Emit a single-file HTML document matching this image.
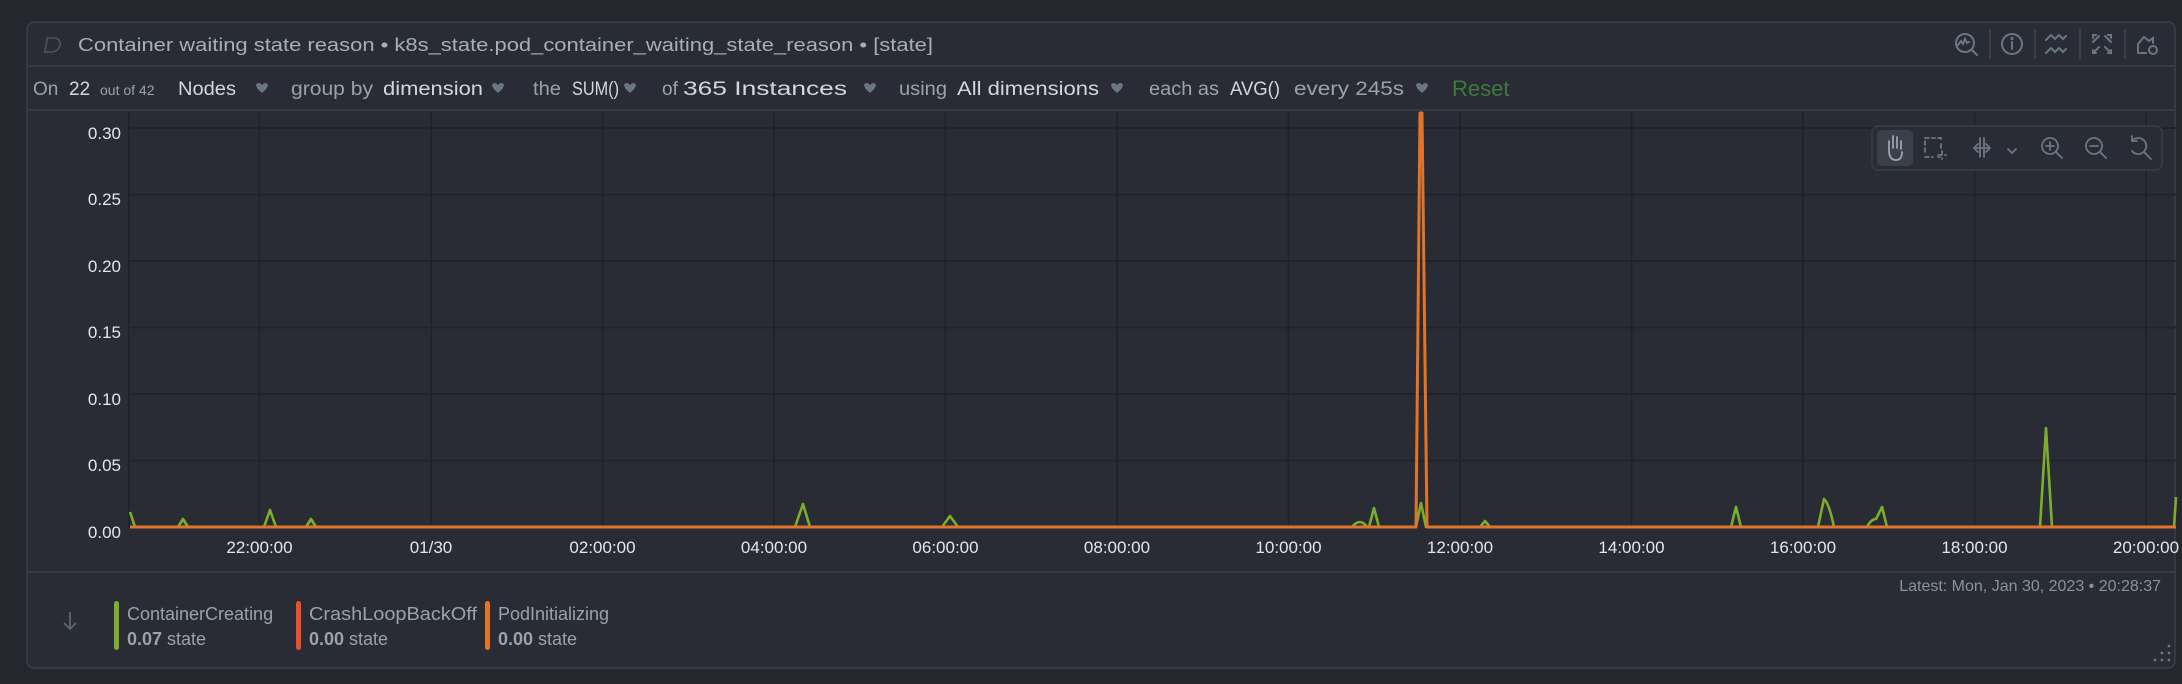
<!DOCTYPE html>
<html><head><meta charset="utf-8"><style>
html,body{margin:0;padding:0;background:#24272d;width:2182px;height:684px;overflow:hidden}
svg{display:block}
text{font-family:"Liberation Sans",sans-serif}
</style></head><body>
<svg width="2182" height="684" viewBox="0 0 2182 684" xmlns="http://www.w3.org/2000/svg">
<rect x="0" y="0" width="2182" height="684" fill="#24272d"/>
<rect x="27" y="22" width="2148" height="646" rx="7" fill="#292c34" stroke="#3b3f48" stroke-width="1.5"/>
<line x1="27" y1="66" x2="2175" y2="66" stroke="#3b3f48" stroke-width="1.5"/>
<line x1="27" y1="110" x2="2175" y2="110" stroke="#3b3f48" stroke-width="1.5"/>
<line x1="27" y1="572" x2="2175" y2="572" stroke="#3b3f48" stroke-width="1.5"/>

<!-- title -->
<path d="M47 38 h7 a7 7 0 0 1 0 14 h-7 z" fill="none" stroke="#4d5460" stroke-width="1.6" transform="skewX(-10) translate(7,0)"/>
<text x="78" y="51" font-size="18.5" fill="#a7aeb8" textLength="855" lengthAdjust="spacingAndGlyphs">Container waiting state reason • k8s_state.pod_container_waiting_state_reason • [state]</text>

<!-- header icons -->
<g fill="none" stroke="#6b7684" stroke-width="2" stroke-linecap="round">
<circle cx="1965" cy="43" r="9"/><line x1="1972" y1="50" x2="1977" y2="55"/><path d="M1958 45 l3-4 2 3 2-5 2 4 2-1"/>
<line x1="1990" y1="30" x2="1990" y2="58" stroke="#3b3f48"/>
<circle cx="2012" cy="44" r="10"/><line x1="2012" y1="42" x2="2012" y2="49"/><circle cx="2012" cy="38.5" r="0.6"/>
<line x1="2035" y1="30" x2="2035" y2="58" stroke="#3b3f48"/>
<path d="M2046 40 l5-5 4 4 4-4 4 4 3-3"/><path d="M2046 53 l5-5 4 4 4-4 4 4 3-3"/>
<line x1="2080" y1="30" x2="2080" y2="58" stroke="#3b3f48"/>
<path d="M2093 38 v-3 h3 M2099 36 l-6 6 M2111 38 v-3 h-3 M2105 36 l6 6 M2093 50 v3 h3 M2093 53 l6-6 M2111 50 v3 h-3 M2111 53 l-6-6"/>
<line x1="2125" y1="30" x2="2125" y2="58" stroke="#3b3f48"/>
<path d="M2140 53 h6 M2138 53 v-9 l6-7 5 4 4-3 v5"/><circle cx="2153" cy="50" r="4"/>
</g>

<!-- toolbar -->
<g font-size="19" fill="#9aa2ad">
<text x="33" y="95">On</text>
<text x="69" y="95" fill="#d3d7dd">22</text>
<text x="100" y="95" font-size="14">out of 42</text>
<text x="178" y="95" fill="#d3d7dd" textLength="58" lengthAdjust="spacingAndGlyphs">Nodes</text>
<text x="291" y="95" textLength="82" lengthAdjust="spacingAndGlyphs">group by</text>
<text x="383" y="95" fill="#d3d7dd" textLength="100" lengthAdjust="spacingAndGlyphs">dimension</text>
<text x="533" y="95" textLength="28" lengthAdjust="spacingAndGlyphs">the</text>
<text x="572" y="95" fill="#d3d7dd" textLength="47" lengthAdjust="spacingAndGlyphs">SUM()</text>
<text x="662" y="95">of</text>
<text x="683" y="95" fill="#d3d7dd" textLength="164" lengthAdjust="spacingAndGlyphs">365 Instances</text>
<text x="899" y="95" textLength="48" lengthAdjust="spacingAndGlyphs">using</text>
<text x="957" y="95" fill="#d3d7dd" textLength="142" lengthAdjust="spacingAndGlyphs">All dimensions</text>
<text x="1149" y="95" textLength="70" lengthAdjust="spacingAndGlyphs">each as</text>
<text x="1230" y="95" fill="#d3d7dd" textLength="50" lengthAdjust="spacingAndGlyphs">AVG()</text>
<text x="1294" y="95" textLength="110" lengthAdjust="spacingAndGlyphs">every 245s</text>
<text x="1452" y="96" font-size="22" fill="#3b7a3c">Reset</text>
</g>
<g fill="#6b7684">
<path d="M256 85 a3 3 0 0 1 5 -1 l1 1 1-1 a3 3 0 0 1 5 1 q0 3 -6 8 q-6 -5 -6 -8z"/>
<path d="M492 85 a3 3 0 0 1 5 -1 l1 1 1-1 a3 3 0 0 1 5 1 q0 3 -6 8 q-6 -5 -6 -8z"/>
<path d="M624 85 a3 3 0 0 1 5 -1 l1 1 1-1 a3 3 0 0 1 5 1 q0 3 -6 8 q-6 -5 -6 -8z"/>
<path d="M864 85 a3 3 0 0 1 5 -1 l1 1 1-1 a3 3 0 0 1 5 1 q0 3 -6 8 q-6 -5 -6 -8z"/>
<path d="M1111 85 a3 3 0 0 1 5 -1 l1 1 1-1 a3 3 0 0 1 5 1 q0 3 -6 8 q-6 -5 -6 -8z"/>
<path d="M1416 85 a3 3 0 0 1 5 -1 l1 1 1-1 a3 3 0 0 1 5 1 q0 3 -6 8 q-6 -5 -6 -8z"/>
</g>

<!-- grid -->
<g stroke="#212328" stroke-width="2">
<line x1="129" y1="128" x2="2176" y2="128"/><line x1="129" y1="194.5" x2="2176" y2="194.5"/>
<line x1="129" y1="261" x2="2176" y2="261"/><line x1="129" y1="327.5" x2="2176" y2="327.5"/>
<line x1="129" y1="394" x2="2176" y2="394"/><line x1="129" y1="460.5" x2="2176" y2="460.5"/>
<line x1="129" y1="112" x2="129" y2="528"/>
<line x1="259.5" y1="112" x2="259.5" y2="528"/><line x1="431" y1="112" x2="431" y2="528"/>
<line x1="602.5" y1="112" x2="602.5" y2="528"/><line x1="774" y1="112" x2="774" y2="528"/>
<line x1="945.5" y1="112" x2="945.5" y2="528"/><line x1="1117" y1="112" x2="1117" y2="528"/>
<line x1="1288.5" y1="112" x2="1288.5" y2="528"/><line x1="1460" y1="112" x2="1460" y2="528"/>
<line x1="1631.5" y1="112" x2="1631.5" y2="528"/><line x1="1803" y1="112" x2="1803" y2="528"/>
<line x1="1974.5" y1="112" x2="1974.5" y2="528"/><line x1="2146" y1="112" x2="2146" y2="528"/>
</g>
<g font-size="17" fill="#e2e5e9" text-anchor="end">
<text x="121" y="139">0.30</text><text x="121" y="205">0.25</text><text x="121" y="272">0.20</text>
<text x="121" y="338">0.15</text><text x="121" y="405">0.10</text><text x="121" y="471">0.05</text>
<text x="121" y="538">0.00</text>
</g>
<g font-size="17" fill="#e2e5e9" text-anchor="middle">
<text x="259.5" y="553">22:00:00</text><text x="431" y="553">01/30</text><text x="602.5" y="553">02:00:00</text>
<text x="774" y="553">04:00:00</text><text x="945.5" y="553">06:00:00</text><text x="1117" y="553">08:00:00</text>
<text x="1288.5" y="553">10:00:00</text><text x="1460" y="553">12:00:00</text><text x="1631.5" y="553">14:00:00</text>
<text x="1803" y="553">16:00:00</text><text x="1974.5" y="553">18:00:00</text><text x="2146" y="553">20:00:00</text>
</g>

<!-- series -->
<path fill="none" stroke="#7aae2c" stroke-width="2.6" stroke-linejoin="round" d="M130 512 L135 527 L178 527 L183 519 L188 527 L264 527 L270 510 L276 527 L306 527 L311 519 L316 527 L795 527 L803 504 L810 527 L942 527 L950 516 L958 527 L1352 527 Q1360 517 1367 527 L1369 527 L1374 508 L1379 527 L1416 527 L1421 503 L1426 527 L1480 527 L1485 521 L1490 527 L1731 527 L1736 507 L1741 527 L1818 527 L1824 499 Q1829 503 1834 527 L1867 527 Q1871 519 1876 519 L1882 507 L1887 527 L2040 527 L2046 428 L2052 527 L2174 527 L2176 497"/>
<path fill="none" stroke="#e0752a" stroke-width="3" stroke-linejoin="round" d="M130 527 L1416 527 L1420 113 L1422 113 L1427 527 L2176 527"/>

<!-- zoom toolbar -->
<rect x="1872" y="126" width="290" height="44" rx="6" fill="#292c34" stroke="#3b3f48" stroke-width="1.2"/>
<rect x="1877" y="130" width="36" height="36" rx="5" fill="#3a3f49"/>
<g fill="none" stroke="#6b7684" stroke-width="1.8" stroke-linecap="round">
<path d="M1889 152 v-11 M1893 148 v-12 M1897 148 v-11 M1901 149 v-8 M1889 150 q0 10 7 10 q6 0 6 -8" stroke="#9aa3ae"/>
<path d="M1925 138 h0 M1925 141 v14 M1925 138 h10 M1938 138 h3 v3 M1941 144 v4 M1925 157 h8 M1938 157 h2 M1942 151 v8 M1938 155 h8" stroke-dasharray="4 3"/>
<path d="M1974 148 h16 M1974 148 l4-4 M1974 148 l4 4 M1990 148 l-4-4 M1990 148 l-4 4 M1980 138 v19 M1984 138 v19"/>
<path d="M2008 149 l4 4 4-4"/>
<circle cx="2050" cy="146" r="8"/><line x1="2056" y1="152" x2="2062" y2="158"/><path d="M2046 146 h8 M2050 142 v8"/>
<circle cx="2094" cy="146" r="8"/><line x1="2100" y1="152" x2="2106" y2="158"/><path d="M2090 146 h8"/>
<path d="M2132 141 a8 8 0 1 1 0 10 M2132 136 v5 h5"/><line x1="2144" y1="152" x2="2151" y2="159"/>
</g>

<!-- latest -->
<text x="2161" y="591" font-size="16" fill="#8a929d" text-anchor="end">Latest:  Mon, Jan 30, 2023 • 20:28:37</text>

<!-- legend -->
<path d="M70 612 v17 M64 623 l6 6 6-6" fill="none" stroke="#5d6774" stroke-width="1.8"/>
<rect x="114" y="601" width="5" height="49" rx="2.5" fill="#7aae2c"/>
<rect x="296" y="601" width="5" height="49" rx="2.5" fill="#e4532d"/>
<rect x="485" y="601" width="5" height="49" rx="2.5" fill="#e0752a"/>
<g font-size="18" fill="#9aa2ad">
<text x="127" y="620">ContainerCreating</text>
<text x="127" y="645"><tspan font-weight="bold">0.07</tspan> state</text>
<text x="309" y="620" textLength="168" lengthAdjust="spacingAndGlyphs">CrashLoopBackOff</text>
<text x="309" y="645"><tspan font-weight="bold">0.00</tspan> state</text>
<text x="498" y="620">PodInitializing</text>
<text x="498" y="645"><tspan font-weight="bold">0.00</tspan> state</text>
</g>
<g fill="#6b7684">
<circle cx="2169" cy="646" r="1.4"/><circle cx="2162" cy="653" r="1.4"/><circle cx="2169" cy="653" r="1.4"/>
<circle cx="2155" cy="660" r="1.4"/><circle cx="2162" cy="660" r="1.4"/><circle cx="2169" cy="660" r="1.4"/>
</g>
</svg>
</body></html>
